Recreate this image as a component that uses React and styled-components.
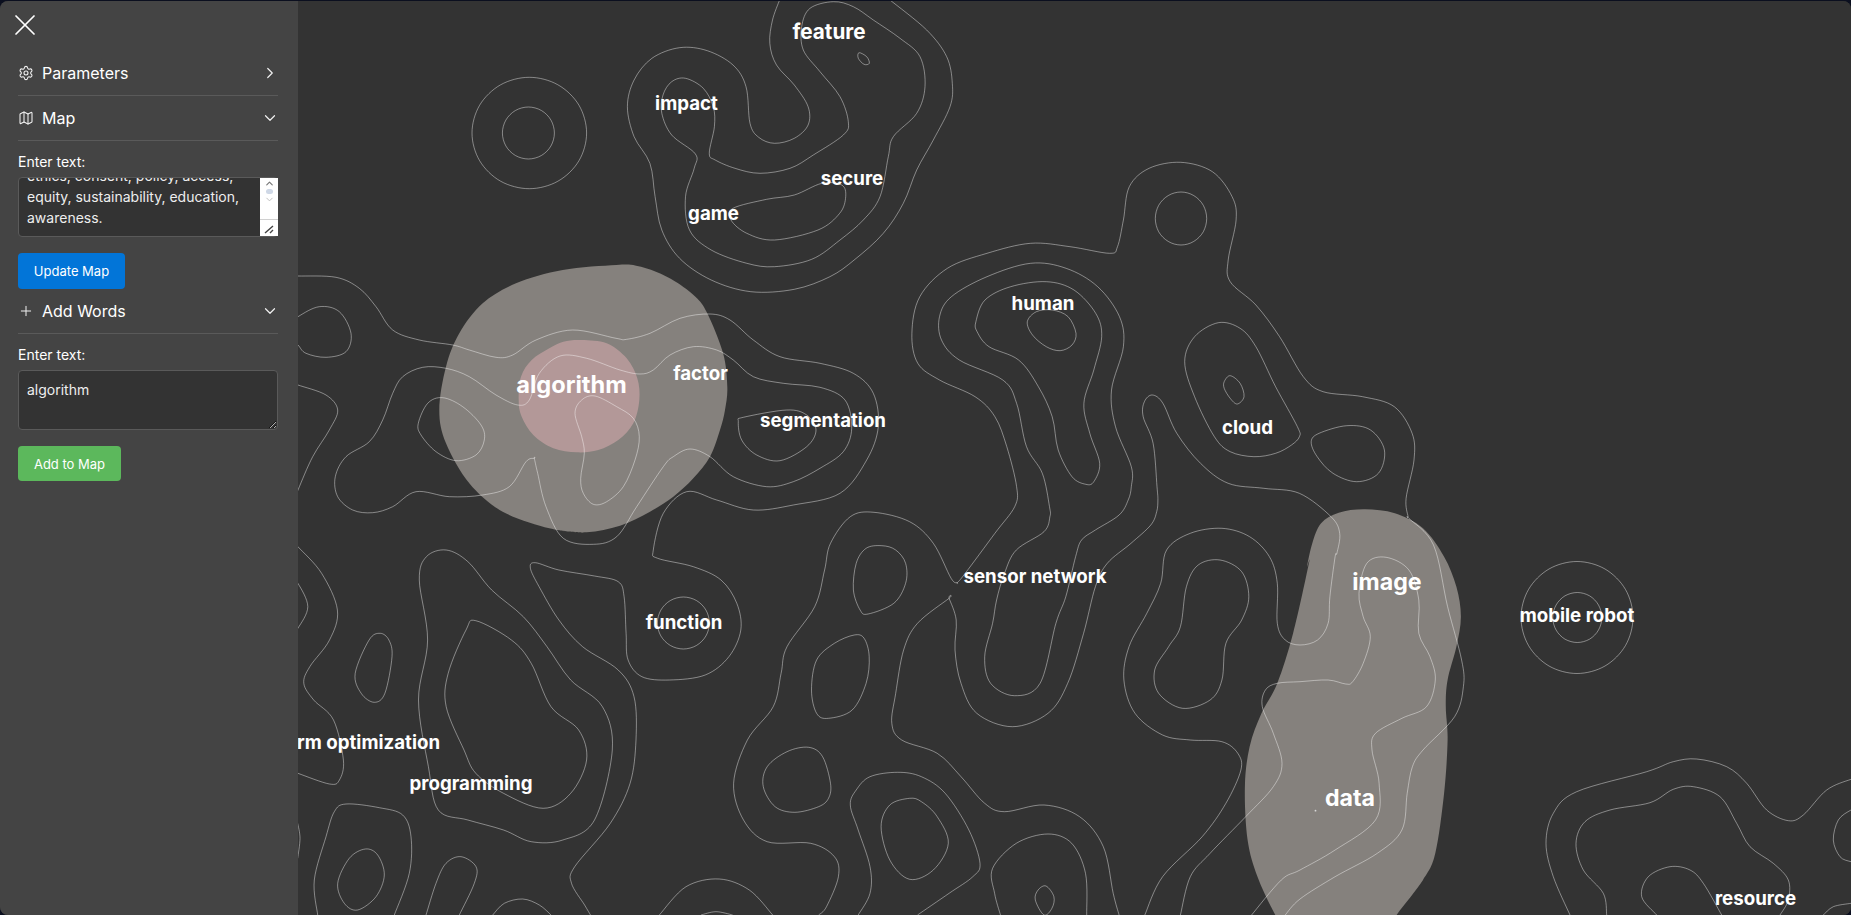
import React, { useEffect, useRef } from 'react';
import styled, { createGlobalStyle } from 'styled-components';
import { X, Settings, Map as MapIcon, Plus, ChevronRight, ChevronDown } from 'lucide-react';

const GlobalStyle = createGlobalStyle`
  html, body {
    margin: 0;
    height: 100%;
    overflow: hidden;
    background: #0b0f1f;
  }
  * { box-sizing: border-box; }
`;

const Page = styled.div`
  display: flex;
  height: 914px;
  margin-top: 1px;
  border-radius: 8px;
  overflow: hidden;
  background: #333333;
  font-family: Inter, "Liberation Sans", sans-serif;
  color: #fff;
`;

const Sidebar = styled.aside`
  flex: 0 0 298px;
  position: relative;
  z-index: 2;
  padding: 0 20px 0 18px;
  background: #444444;
`;

const CloseButton = styled.button`
  display: block;
  width: 36px;
  height: 36px;
  margin: 6px 0 8px -11px;
  padding: 0;
  border: none;
  background: none;
  color: #fff;
`;

const SectionRow = styled.div`
  display: flex;
  align-items: center;
  height: 45px;
  border-bottom: 1px solid #5a5a5a;
  font-size: 16px;
  color: #fff;
`;

const RowIcon = styled.span`
  display: flex;
  justify-content: center;
  width: 16px;
  margin-right: 8px;
  color: #f0f0f0;
`;

const RowTitle = styled.span`
  flex: 1;
`;

const RowChevron = styled.span`
  display: flex;
  margin-right: -1px;
  color: #f0f0f0;
`;

const FieldLabel = styled.div`
  margin-top: 12px;
  font-size: 14px;
  line-height: 17px;
  color: #fff;
`;

const FieldBox = styled.div`
  position: relative;
  margin-top: 7px;
  height: 60px;
  width: 260px;
`;

const TextBox = styled.textarea`
  display: block;
  width: 100%;
  height: 100%;
  padding: 8px 26px 8px 8px;
  border: 1px solid #5a5a5a;
  border-radius: 4px;
  outline: none;
  background: #333333;
  color: #eeeeee;
  font-family: inherit;
  font-size: 14px;
  line-height: 21px;
  overflow: hidden;
  resize: ${props => (props.$grip ? 'vertical' : 'none')};
`;

const FakeScrollbar = styled.div`
  position: absolute;
  top: 1px;
  right: 0;
  bottom: 1px;
  width: 18px;
  background: #ffffff;
  display: flex;
  flex-direction: column;
  align-items: center;
  color: #777;
`;

const ScrollThumb = styled.div`
  width: 7px;
  height: 5px;
  border-radius: 3px;
  background: #cfd8e6;
`;

const ScrollUp = styled(ChevronDown)`
  transform: rotate(180deg);
`;

const ScrollGrip = styled.div`
  margin-top: auto;
  width: 100%;
  height: 17px;
  border-top: 1px solid #d0d0d0;
  display: flex;
  align-items: center;
  justify-content: center;
`;

const ActionButton = styled.button`
  display: block;
  width: ${props => props.$width}px;
  height: ${props => props.$height}px;
  margin-top: ${props => props.$top}px;
  padding: 0;
  border: none;
  border-radius: 4px;
  background: ${props => props.$color};
  color: #fff;
  font-family: inherit;
  font-size: 13px;
`;

const Canvas = styled.main`
  flex: 1;
  position: relative;
  overflow: hidden;
  background: #333333;
`;

const MapSvg = styled.svg`
  position: absolute;
  inset: 0;
  display: block;
`;

const WordLabel = styled.span`
  position: absolute;
  left: ${props => props.$x}px;
  top: ${props => props.$y}px;
  transform: translate(-50%, -50%);
  font-size: ${props => props.$size}px;
  font-weight: 700;
  color: #fff;
  white-space: nowrap;
`;

// the crops were read in their own scale, so points are noted per crop
const frame = (ox, oy, sx, sy = sx) => (...c) => {
  const pts = [];
  for (let i = 0; i < c.length; i += 2) pts.push([ox + c[i] / sx, oy + c[i + 1] / sy]);
  return pts;
};

const Z3 = frame(300, 0, 2.529, 3);
const Z4 = frame(900, 140, 2.529, 3);
const Z5 = frame(290, 500, 2.529, 3);
const Z6 = frame(700, 500, 2.529, 3);
const Z7 = frame(1300, 500, 2.846, 3);
const Z8 = frame(760, 0, 3);
const Z9 = frame(296, 260, 3);
const Z10 = frame(520, 300, 3);
const Z11 = frame(1540, 740, 3);
const Z12 = frame(296, 780, 3);

const ring = (cx, cy, rx, ry) => {
  const pts = [];
  for (let i = 0; i < 12; i++) {
    const a = (i / 12) * Math.PI * 2;
    pts.push([cx + Math.cos(a) * rx, cy + Math.sin(a) * ry]);
  }
  return pts;
};

const smooth = (pts, closed) => {
  const n = pts.length;
  const at = i => (closed ? pts[(i + n) % n] : pts[Math.max(0, Math.min(n - 1, i))]);
  let d = `M${pts[0][0].toFixed(1)} ${pts[0][1].toFixed(1)}`;
  const last = closed ? n : n - 1;
  for (let i = 0; i < last; i++) {
    const [p0, p1, p2, p3] = [at(i - 1), at(i), at(i + 1), at(i + 2)];
    const c1x = p1[0] + (p2[0] - p0[0]) / 6;
    const c1y = p1[1] + (p2[1] - p0[1]) / 6;
    const c2x = p2[0] - (p3[0] - p1[0]) / 6;
    const c2y = p2[1] - (p3[1] - p1[1]) / 6;
    d += `C${c1x.toFixed(1)} ${c1y.toFixed(1)} ${c2x.toFixed(1)} ${c2y.toFixed(1)} ${p2[0].toFixed(1)} ${p2[1].toFixed(1)}`;
  }
  return closed ? d + 'Z' : d;
};

const blobs = [
  {
    fill: '#85817d',
    pts: [
      ...Z9(860, 818, 760, 805, 620, 755, 520, 670, 450, 550, 430, 450, 450, 320, 490, 220, 560, 130, 660, 70, 800, 30),
      ...Z3(800, 795, 850, 797, 900, 815, 950, 845, 1000, 890, 1030, 940, 1070, 1060),
      ...Z10(622, 260, 615, 330, 600, 390, 570, 470, 520, 535, 460, 590, 390, 635, 300, 677, 200, 697, 100, 690),
    ],
  },
  {
    fill: '#b39898',
    pts: Z10(185, 120, 260, 130, 320, 175, 352, 235, 358, 300, 340, 370, 295, 420, 235, 450, 170, 457, 100, 445, 40, 405, 5, 350, -4, 300, 3, 230, 35, 180, 88, 145, 130, 125),
  },
  {
    fill: '#85817d',
    pts: [
      ...Z7(185, 28, 270, 40, 350, 85, 410, 170, 445, 260, 458, 350, 445, 440, 420, 540, 415, 620, 420, 720, 410, 880, 385, 1060, 350, 1140, 275, 1245, 220, 1330),
      ...Z6(1500, 1330, 1455, 1245, 1410, 1130, 1385, 1020, 1378, 860, 1390, 740, 1420, 640, 1460, 550, 1500, 400, 1540, 190),
      ...Z7(20, 200, 35, 130, 60, 70, 110, 38),
    ],
  },
];

const open = pts => ({ pts, closed: false });
const loop = pts => ({ pts, closed: true });

const contours = [
  // top cluster
  open([
    ...Z3(1213, 0, 1195, 60, 1188, 130, 1205, 195, 1250, 255, 1285, 320, 1285, 375, 1250, 415, 1200, 430, 1160, 412, 1138, 370, 1128, 260, 1095, 195, 1030, 152, 960, 143, 890, 175, 845, 240, 828, 320, 845, 410, 885, 490, 898, 590, 915, 690, 960, 775, 1040, 840, 1140, 875, 1250, 868, 1340, 830),
    ...Z8(285, 778, 370, 700, 430, 610, 470, 510, 520, 420, 570, 320, 577, 250, 560, 170, 500, 90, 390, 0),
  ]),
  loop([
    ...Z8(220, 5, 150, 25, 125, 80, 130, 150, 180, 215, 240, 290, 265, 365, 250, 405, 160, 465, 90, 505, 0, 520),
    ...Z3(1100, 505, 1050, 480, 1035, 460, 1048, 380, 1045, 320, 1020, 265, 975, 235, 940, 245, 918, 285, 915, 340, 940, 405, 1000, 462, 997, 505, 975, 590, 985, 690, 1040, 750, 1130, 790, 1200, 800),
    ...Z8(155, 778, 240, 720, 310, 660, 360, 590, 385, 470, 400, 410, 470, 340, 495, 260, 480, 170, 420, 115, 340, 60, 280, 20),
  ]),
  loop(Z3(1095, 625, 1180, 598, 1250, 585, 1320, 550, 1370, 555, 1380, 590, 1365, 640, 1310, 690, 1200, 720, 1130, 700, 1090, 660)),
  loop(Z8(297, 158, 320, 170, 328, 190, 312, 193, 295, 175)),
  loop(ring(529.3, 133, 57.3, 55.7)),
  loop(ring(528.4, 133, 26, 26)),
  loop(ring(1577, 617.5, 56, 56)),
  loop(ring(1577.3, 617.5, 24.5, 25)),
  loop(ring(683.4, 623, 26, 26)),
  loop(ring(1181, 218.5, 25.7, 26.5)),
  // human / cloud ridges
  open([
    ...Z6(300, 1245, 320, 1220, 350, 1130, 340, 1070, 280, 1030, 170, 1025, 110, 960, 85, 850, 120, 720, 185, 620, 205, 520, 220, 440, 290, 320, 315, 210, 330, 130, 380, 50, 440, 37, 530, 65, 590, 130, 635, 235),
    ...Z4(145, 1328, 145, 1328, 165, 1300, 240, 1180, 290, 1100, 295, 1040, 270, 920, 240, 830, 190, 770, 100, 720, 45, 670, 30, 580, 50, 470, 120, 385, 220, 340, 330, 310, 430, 320, 530, 340, 550, 320, 565, 240, 580, 140, 630, 85, 710, 67, 790, 95, 840, 170, 850, 240, 830, 360, 835, 425, 900, 495, 960, 590, 1020, 710, 1070, 755, 1170, 770, 1250, 800, 1295, 880, 1300, 960, 1280, 1075, 1285, 1130),
    ...Z7(310, 55, 380, 135, 420, 320, 460, 480, 465, 560, 440, 650, 350, 750, 320, 800, 305, 880, 290, 990, 220, 1060, 100, 1130, 0, 1197),
    ...Z6(1480, 1245),
  ]),
  loop([
    ...Z4(378, 1100, 360, 1000, 320, 920, 295, 790, 260, 720, 150, 660, 105, 600, 100, 530, 130, 470, 220, 410, 330, 370, 420, 385, 500, 440, 555, 530, 565, 620, 535, 750, 545, 860, 585, 980, 585, 1040),
    ...Z6(1083, 0, 1060, 45, 1000, 90, 965, 120, 950, 170, 925, 290, 900, 370, 860, 550, 795, 587, 735, 550, 720, 470, 740, 370, 750, 300, 770, 220, 800, 150, 870, 95, 885, 50),
  ]),
  loop(Z4(192, 545, 215, 480, 280, 440, 370, 425, 440, 450, 495, 520, 510, 590, 490, 690, 465, 790, 480, 880, 505, 970, 490, 1025, 470, 1033, 435, 1010, 400, 930, 385, 830, 350, 740, 300, 660, 225, 620, 195, 575)),
  loop(Z4(322, 545, 345, 515, 385, 510, 425, 530, 445, 580, 435, 615, 405, 632, 370, 620, 335, 585)),
  open([
    ...Z6(1060, 1245, 1045, 1180, 1020, 1040, 960, 950, 870, 915, 770, 935, 720, 910, 660, 830, 600, 760, 510, 720, 485, 670, 495, 580, 515, 450, 550, 370, 630, 295, 630, 295, 648, 360, 645, 450, 660, 550, 700, 640, 790, 680, 880, 640, 930, 550, 970, 400, 1000, 260, 1030, 190, 1090, 130, 1140, 75, 1155, 35, 1158, 0),
    ...Z4(650, 1040, 640, 910, 615, 830, 618, 785, 638, 765, 665, 790, 700, 880, 760, 970, 830, 1030, 920, 1045, 1010, 1060, 1090, 1130, 1112, 1180, 1105, 1240),
    ...Z7(100, 170, 85, 290, 80, 370, 50, 420, 0, 435),
    ...Z6(1480, 420, 1460, 370, 1460, 250, 1440, 170, 1390, 110, 1320, 85, 1240, 100, 1180, 150, 1165, 250, 1130, 340, 1085, 440, 1072, 540, 1100, 640, 1170, 705, 1240, 720, 1320, 725, 1360, 760, 1368, 810, 1330, 910, 1270, 1010, 1170, 1130, 1125, 1245),
  ]),
  loop(Z6(1315, 180, 1260, 195, 1230, 260, 1215, 380, 1185, 440, 1150, 510, 1160, 580, 1220, 625, 1290, 600, 1320, 540, 1330, 430, 1370, 360, 1388, 290, 1370, 215)),
  open([
    ...Z6(1395, 1245, 1470, 1140),
    ...Z7(0, 1110, 100, 1050, 215, 960, 225, 850, 205, 750, 215, 700, 290, 655, 360, 620, 385, 540, 370, 470, 338, 400, 338, 300, 310, 210, 245, 172, 190, 190, 168, 280, 180, 350, 200, 410, 180, 490, 150, 545, 130, 552, 80, 540, 0, 545),
    ...Z6(1460, 550, 1430, 570, 1422, 620, 1450, 700, 1472, 790, 1450, 860, 1380, 950, 1290, 1060, 1240, 1130, 1215, 1245),
  ]),
  loop(Z4(720, 665, 745, 590, 805, 548, 860, 565, 900, 620, 950, 740, 1005, 860, 1010, 890, 990, 915, 950, 940, 895, 950, 835, 935, 795, 890, 745, 770)),
  loop(Z4(835, 707, 860, 730, 870, 770, 853, 792, 835, 775, 820, 745, 820, 725)),
  loop(Z4(1040, 905, 1060, 880, 1130, 857, 1190, 870, 1225, 930, 1210, 1000, 1155, 1025, 1095, 1000, 1055, 950)),
  // middle bottom
  loop(Z6(460, 137, 420, 145, 395, 190, 388, 270, 405, 330, 425, 342, 490, 310, 520, 250, 520, 190, 495, 150)),
  loop(Z6(390, 405, 340, 430, 295, 480, 282, 570, 295, 640, 325, 655, 385, 630, 420, 550, 428, 470, 415, 415)),
  loop(Z6(275, 742, 220, 755, 170, 800, 160, 860, 190, 920, 240, 937, 300, 920, 325, 895, 330, 850, 310, 770)),
  open(Z6(400, 1245, 430, 1180, 430, 1100, 400, 990, 380, 915, 395, 870, 430, 830, 500, 817, 560, 830, 620, 880, 680, 990, 708, 1090, 690, 1130, 630, 1180, 550, 1245)),
  loop(Z6(530, 895, 480, 915, 458, 980, 480, 1080, 530, 1138, 590, 1110, 628, 1030, 600, 950, 560, 905)),
  open(Z6(760, 1245, 745, 1180, 740, 1105, 800, 1030, 880, 1002, 940, 1030, 975, 1120, 978, 1245)),
  loop(Z6(875, 1158, 855, 1170, 848, 1200, 870, 1245, 890, 1225, 895, 1190)),
  // algorithm area
  open([
    ...Z9(-20, 48, 6, 48, 120, 52, 190, 85, 240, 140, 290, 210, 370, 240, 470, 255, 520, 270, 600, 292, 650, 285, 720, 240, 830, 210, 960, 235),
    ...Z10(320, 118, 390, 100, 480, 55, 570, 42, 630, 60, 700, 120, 780, 170, 900, 190, 1000, 220, 1060, 280, 1075, 380, 1040, 480, 960, 580, 820, 615, 700, 630, 590, 600, 500, 575, 430, 640, 400, 750),
    ...Z5(930, 175, 1020, 200, 1090, 240, 1130, 310, 1140, 390, 1110, 470, 1050, 525, 960, 540, 890, 530, 855, 480, 850, 400, 845, 290, 830, 245, 770, 228, 680, 210, 620, 188, 608, 205, 630, 260, 680, 360, 740, 440, 830, 510, 870, 590, 875, 720, 860, 850, 810, 970, 720, 1100, 712, 1150, 745, 1215, 760, 1245),
  ]),
  loop([
    ...Z10(120, 168, 200, 175, 300, 210, 360, 222, 400, 210, 450, 165, 520, 140, 590, 150, 640, 180, 700, 230, 790, 250, 900, 262, 975, 300, 995, 385, 970, 455, 900, 505, 820, 545, 740, 560, 640, 530, 570, 470, 510, 447, 460, 470, 430, 500, 350, 620, 290, 710, 220, 733, 130, 715),
    ...Z9(750, 740, 725, 640, 715, 595, 715, 595, 690, 605, 640, 680, 560, 705, 460, 710, 360, 695, 290, 740, 230, 758, 170, 750, 125, 710, 118, 650, 150, 590, 220, 545, 260, 480, 290, 400, 320, 350, 380, 322, 450, 325, 520, 350, 600, 405, 665, 435, 700, 420, 730, 340),
  ]),
  loop(Z10(165, 340, 185, 300, 225, 288, 290, 320, 340, 355, 358, 410, 345, 480, 310, 560, 260, 605, 220, 613, 190, 580, 182, 535, 193, 460, 185, 410)),
  loop(Z9(367, 490, 395, 430, 440, 413, 500, 440, 555, 495, 565, 540, 540, 585, 480, 602, 420, 575, 375, 525)),
  open(Z9(-30, 200, 6, 170, 70, 140, 130, 155, 165, 220, 150, 275, 90, 292, 30, 280, 6, 255, -20, 230)),
  loop(Z10(655, 365, 670, 352, 800, 330, 860, 345, 888, 390, 860, 440, 780, 482, 710, 465, 665, 420)),
  open(Z9(-20, 365, 6, 375, 90, 405, 125, 450, 100, 510, 50, 590, 6, 690, -10, 730)),
  // lower left
  open(Z5(0, 115, 20, 140, 80, 220, 120, 330, 100, 420, 50, 500, 35, 550, 60, 600, 110, 660, 135, 780, 125, 840, 100, 852, 20, 820, -10, 805)),
  open(Z5(0, 230, 20, 250, 45, 320, 20, 385, 0, 410)),
  loop(Z5(228, 400, 200, 420, 165, 520, 180, 580, 213, 607, 240, 580, 258, 470, 250, 420)),
  loop(Z5(395, 150, 345, 170, 327, 240, 348, 420, 325, 600, 350, 800, 375, 930, 450, 960, 540, 990, 610, 1025, 690, 1020, 770, 960, 815, 750, 790, 620, 710, 540, 650, 440, 590, 350, 510, 270, 450, 185)),
  loop(Z5(470, 362, 445, 390, 400, 520, 395, 620, 440, 750, 470, 820, 540, 880, 640, 925, 710, 880, 750, 780, 730, 690, 660, 620, 610, 490, 560, 420)),
  open(Z12(65, 405, 55, 300, 90, 170, 115, 95, 150, 72, 250, 83, 320, 105, 345, 170, 340, 280, 295, 405)),
  loop(Z12(208, 207, 160, 235, 125, 310, 145, 370, 185, 390, 240, 350, 265, 285, 245, 225)),
  open(Z12(390, 405, 420, 310, 450, 250, 495, 230, 540, 260, 535, 310, 490, 405)),
  open(Z12(590, 405, 625, 370, 680, 357, 730, 375, 765, 405)),
  open(Z12(5, 130, 12, 175, 5, 235)),
  open(Z12(1090, 405, 1170, 320, 1270, 297, 1360, 330, 1430, 405)),
  open(Z12(1215, 405, 1260, 395, 1310, 405)),
  // bottom right
  open(Z11(90, 525, 40, 410, 18, 310, 40, 220, 110, 155, 320, 95, 400, 65, 470, 57, 560, 80, 620, 130, 680, 210, 745, 242, 790, 225, 860, 150, 933, 118, 960, 112)),
  open(Z11(200, 525, 190, 460, 130, 390, 108, 310, 135, 245, 210, 210, 330, 188, 400, 148, 460, 140, 540, 170, 590, 250, 630, 320, 700, 370, 745, 420, 745, 480, 720, 525)),
  open(Z11(350, 525, 305, 470, 325, 410, 390, 380, 450, 390, 490, 430, 545, 525)),
  open(Z11(960, 200, 933, 210, 895, 240, 880, 300, 900, 350, 933, 365, 960, 370)),
  open(Z11(850, 525, 880, 500, 933, 490)),
];

// page coordinates of each word's centre
const words = [
  ['feature', 829, 31, 20.7],
  ['impact', 686.5, 102.5, 18.7],
  ['secure', 852, 178, 18.7],
  ['game', 713.5, 212.5, 18.7],
  ['algorithm', 571.5, 384, 23.6],
  ['factor', 700.5, 373, 18.7],
  ['segmentation', 823, 420, 18.7],
  ['human', 1043, 303, 18.7],
  ['cloud', 1247.5, 427, 18.7],
  ['sensor network', 1035, 576, 18.7],
  ['image', 1387, 582, 23.2],
  ['mobile robot', 1577, 615, 18.7],
  ['function', 684, 622, 18.7],
  ['swarm optimization', 350, 742, 18.7],
  ['programming', 471, 783, 18.7],
  ['data', 1350, 798, 23.2],
  ['resource', 1755.5, 898, 18.7],
];

const MAP_LEFT = 298;

const Contours = () => (
  <MapSvg width="1553" height="914" viewBox={`${MAP_LEFT} 1 1553 914`}>
    {blobs.map((b, i) => (
      <path key={i} d={smooth(b.pts, true)} fill={b.fill} />
    ))}
    <circle cx="1315.5" cy="810.7" r="0.9" fill="#d8d8d8" />
    {contours.map((c, i) => (
      <path key={i} d={smooth(c.pts, c.closed)} fill="none" stroke="rgba(255,255,255,0.42)" strokeWidth="1" />
    ))}
  </MapSvg>
);

const MapText = 'ethics, consent, policy, access, equity, sustainability, education, awareness.';

const App = () => {
  const mapBox = useRef(null);

  useEffect(() => {
    const box = mapBox.current;
    if (box) box.scrollTop = box.scrollHeight - box.clientHeight;
  }, []);

  return (
    <Page>
      <GlobalStyle />
      <Sidebar>
        <CloseButton aria-label="Close">
          <X size={36} strokeWidth={1.15} />
        </CloseButton>
        <SectionRow>
          <RowIcon><Settings size={16} strokeWidth={1.6} /></RowIcon>
          <RowTitle>Parameters</RowTitle>
          <RowChevron><ChevronRight size={18} strokeWidth={1.6} /></RowChevron>
        </SectionRow>
        <SectionRow>
          <RowIcon><MapIcon size={16} strokeWidth={1.6} /></RowIcon>
          <RowTitle>Map</RowTitle>
          <RowChevron><ChevronDown size={18} strokeWidth={1.6} /></RowChevron>
        </SectionRow>
        <FieldLabel>Enter text:</FieldLabel>
        <FieldBox>
          <TextBox ref={mapBox} readOnly value={MapText} />
          <FakeScrollbar>
            <ScrollUp size={11} strokeWidth={2.5} />
            <ScrollThumb />
            <ChevronDown size={11} strokeWidth={2} color="#bbb" />
            <ScrollGrip>
              <svg width="12" height="12" viewBox="0 0 12 12">
                <path d="M2 11L10 4M7 11L10 8" stroke="#444" strokeWidth="1.4" />
              </svg>
            </ScrollGrip>
          </FakeScrollbar>
        </FieldBox>
        <ActionButton $width={107} $height={36} $top={16} $color="#0275d8">Update Map</ActionButton>
        <SectionRow>
          <RowIcon><Plus size={18} strokeWidth={1.5} /></RowIcon>
          <RowTitle>Add Words</RowTitle>
          <RowChevron><ChevronDown size={18} strokeWidth={1.6} /></RowChevron>
        </SectionRow>
        <FieldLabel>Enter text:</FieldLabel>
        <FieldBox>
          <TextBox $grip readOnly value="algorithm" />
        </FieldBox>
        <ActionButton $width={103} $height={35} $top={16} $color="#5cb85c">Add to Map</ActionButton>
      </Sidebar>
      <Canvas>
        <Contours />
        {words.map(([text, x, y, size]) => (
          <WordLabel key={text} $x={x - MAP_LEFT} $y={y - 1} $size={size}>{text}</WordLabel>
        ))}
      </Canvas>
    </Page>
  );
};

export default App;
